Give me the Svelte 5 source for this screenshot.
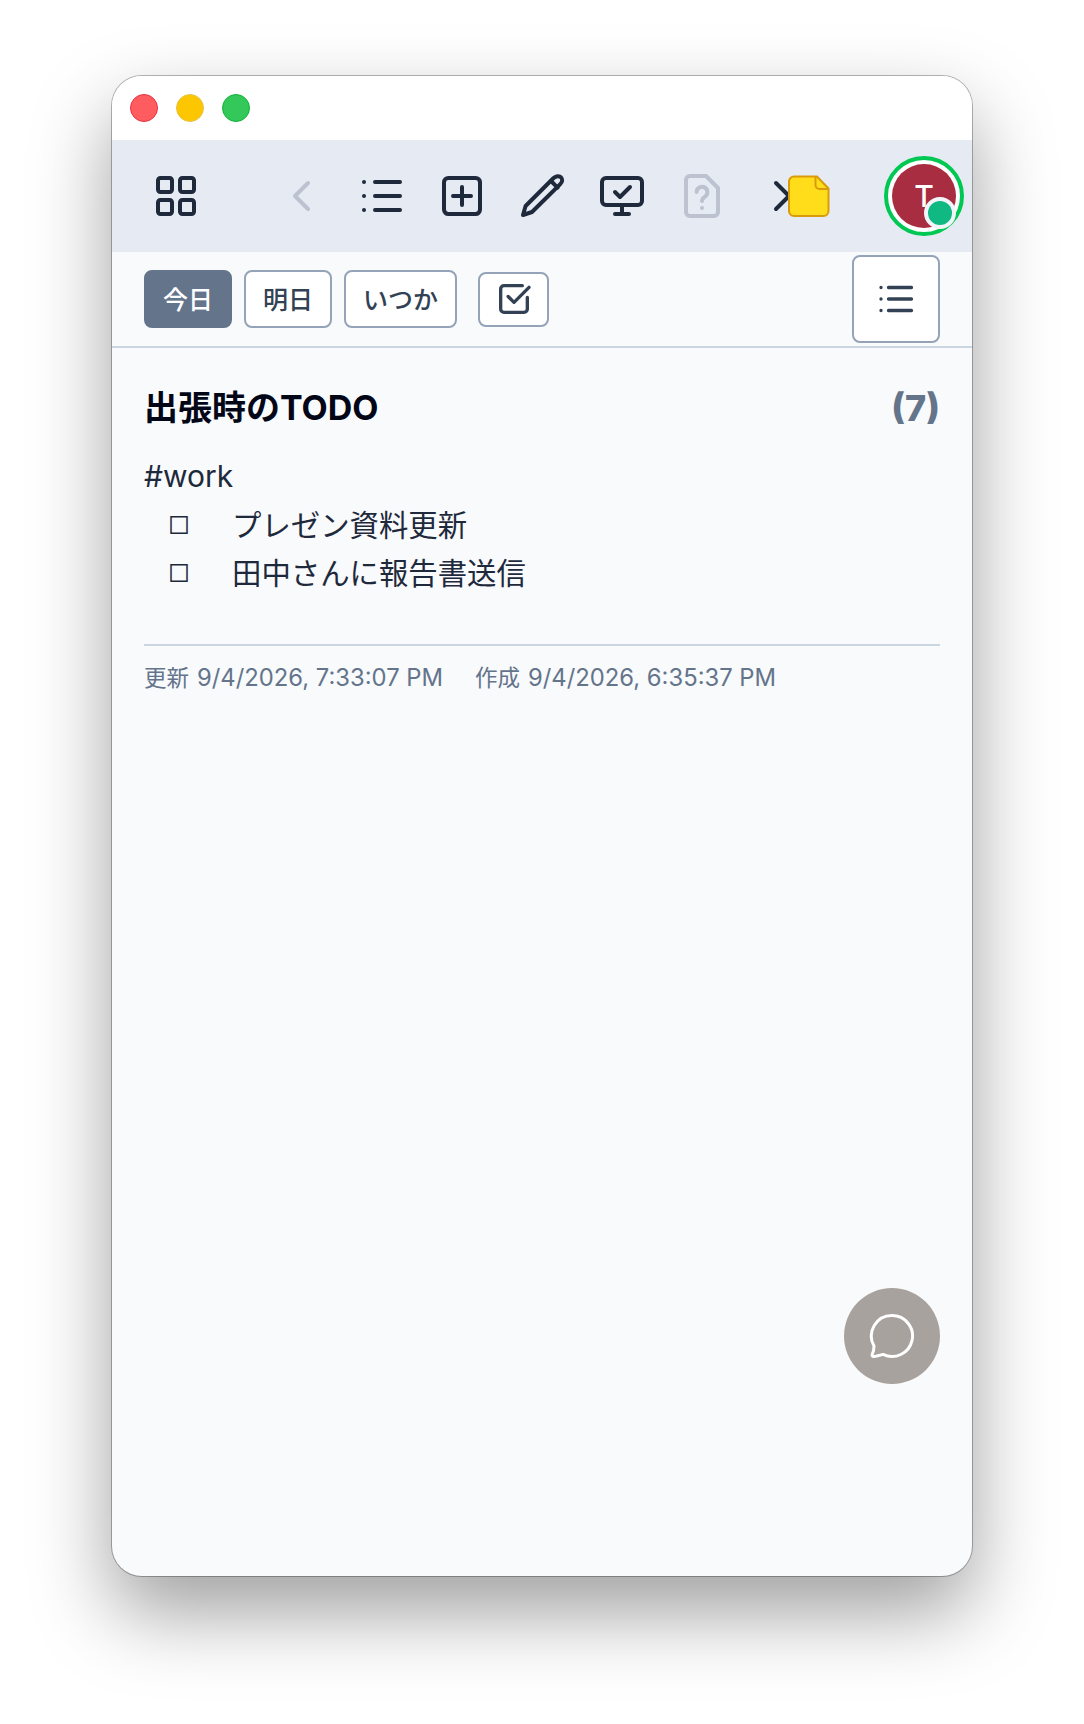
<script>
  const tabs = [
    { label: '今日', active: true },
    { label: '明日', active: false },
    { label: 'いつか', active: false }
  ];
  const items = ['プレゼン資料更新', '田中さんに報告書送信'];
</script>

<div class="stage">
  <div class="window">
    <header class="titlebar">
      <span class="light red"></span>
      <span class="light yellow"></span>
      <span class="light green"></span>
    </header>

    <nav class="toolbar">
      <button class="slot first" aria-label="apps">
        <svg viewBox="0 0 24 24" class="icon"><rect x="3" y="3" width="7" height="7" rx="1.2"/><rect x="14" y="3" width="7" height="7" rx="1.2"/><rect x="3" y="14" width="7" height="7" rx="1.2"/><rect x="14" y="14" width="7" height="7" rx="1.2"/></svg>
      </button>
      <button class="slot back" aria-label="back">
        <svg viewBox="0 0 24 24" class="icon muted"><path d="M15 5.500 8.500 12l6.500 6.500"/></svg>
      </button>
      <button class="slot" aria-label="list">
        <svg viewBox="0 0 24 24" class="icon"><path d="M8.500 5H21M8.500 12H21M8.500 19H21"/><path d="M3 5h.01M3 12h.01M3 19h.01"/></svg>
      </button>
      <button class="slot" aria-label="add">
        <svg viewBox="0 0 24 24" class="icon"><rect x="3" y="3" width="18" height="18" rx="2.200"/><path d="M12 7.500v9M7.500 12h9"/></svg>
      </button>
      <button class="slot" aria-label="edit">
        <svg viewBox="0 0 24 24" class="icon"><path d="M2.500 21.500 3.800 17 17.800 3c1.200-1 2.900-1.200 3.700-.3 1 1 .7 2.300-.5 3.500L7 20z"/><path d="m16.500 4.500 3.300 3.300"/></svg>
      </button>
      <button class="slot" aria-label="present">
        <svg viewBox="0 0 24 24" class="icon"><rect x="2" y="3" width="20" height="13.500" rx="2"/><path d="M12 16.500V21M8.500 21h7M8.500 10l2.500 2.500 5-5"/></svg>
      </button>
      <button class="slot" aria-label="help">
        <svg viewBox="0 0 24 24" class="icon muted"><path d="M6 2h8l6 6v12a2 2 0 0 1-2 2H6a2 2 0 0 1-2-2V4a2 2 0 0 1 2-2z"/><path d="M9.300 10a2.700 2.700 0 1 1 4.200 2.300c-.9.600-1.500 1.100-1.500 2.200"/><path d="M12 18h.01"/></svg>
      </button>
      <button class="slot note" aria-label="note">
        <svg viewBox="0 0 24 24" class="icon chev"><path d="M8.500 5.500 15 12l-6.500 6.500"/></svg>
        <svg viewBox="0 0 42 43" class="sticky"><path d="M6 1.500h23l11.500 12V36a5 5 0 0 1-5 5H6a5 5 0 0 1-5-5V6.500a5 5 0 0 1 5-5z" fill="#ffdd1a" stroke="#d99b0a" stroke-width="2"/><path d="M27.500 1.500V10a4 4 0 0 0 4 4h9" fill="none" stroke="#d99b0a" stroke-width="2"/></svg>
      </button>
      <div class="avatar">
        <div class="face">T</div>
        <span class="dot"></span>
      </div>
    </nav>

    <div class="subbar">
      {#each tabs as tab}
        <button class="tab" class:active={tab.active}>{tab.label}</button>
      {/each}
      <button class="tab check" aria-label="done">
        <svg viewBox="0 0 24 24"><path d="M20 11v7a2 2 0 0 1-2 2H6a2 2 0 0 1-2-2V6a2 2 0 0 1 2-2h11"/><path d="m8.500 10.500 3.500 3.500 9-9"/></svg>
      </button>
      <button class="tab listbtn" aria-label="list view">
        <svg viewBox="0 0 24 24"><path d="M7.500 5.100h13.800M7.500 12h13.800M7.500 18.900h13.800"/><path d="M3 5.100h.01M3 12h.01M3 18.900h.01"/></svg>
      </button>
    </div>

    <main class="content">
      <div class="heading">
        <h1>出張時のTODO</h1>
        <span class="count">(7)</span>
      </div>
      <p class="tag">#work</p>
      <ul>
        {#each items as item}
          <li><span class="box">□</span><span>{item}</span></li>
        {/each}
      </ul>
      <div class="meta">
        <span><span class="label">更新</span>9/4/2026, 7:33:07 PM</span>
        <span><span class="label">作成</span>9/4/2026, 6:35:37 PM</span>
      </div>
      <button class="fab" aria-label="chat">
        <svg viewBox="0 0 48 48"><path d="M24 3.500a20.500 20.500 0 1 1-9 38.900c-3 .8-6.500 1.900-9 2.100-1.700.1-2.400-.9-1.700-2.300.8-1.600 1.700-5 1.700-8.200A20.500 20.500 0 0 1 24 3.500z"/></svg>
      </button>
    </main>
  </div>
</div>

<style>
  :global(body) {
    margin: 0;
    background: #fff;
    font-family: Inter, "Noto Sans CJK JP", sans-serif;
  }
  .stage {
    height: 1724px;
    padding: 76px 112px 0;
    box-sizing: border-box;
    overflow: hidden;
  }
  .window {
    width: 860px;
    height: 1500px;
    border-radius: 30px;
    overflow: hidden;
    background: #f8fafc;
    display: flex;
    flex-direction: column;
    box-shadow: 0 0 0 1px rgba(0, 0, 0, 0.28), 0 36px 80px rgba(0, 0, 0, 0.38);
  }
  .titlebar {
    height: 64px;
    flex: none;
    background: #fff;
    display: flex;
    align-items: center;
    gap: 18px;
    padding-left: 18px;
  }
  .light {
    width: 28px;
    height: 28px;
    border-radius: 50%;
    box-sizing: border-box;
    border: 1px solid;
  }
  .red { background: #ff5c60; border-color: #ec3040; }
  .yellow { background: #fcc700; border-color: #e6c24a; }
  .green { background: #34c759; border-color: #12b43a; }
  .toolbar {
    height: 112px;
    flex: none;
    background: #e5eaf3;
    display: flex;
    align-items: center;
    padding-left: 24px;
  }
  .slot {
    width: 80px;
    height: 80px;
    padding: 0;
    border: 0;
    background: none;
    display: flex;
    align-items: center;
    justify-content: center;
    flex: none;
  }
  .back { margin-left: 46px; }
  .icon {
    width: 48px;
    height: 48px;
    fill: none;
    stroke: #1e293b;
    stroke-width: 2;
    stroke-linecap: round;
    stroke-linejoin: round;
  }
  .muted { stroke: #bcc2cf; }
  .note {
    width: 142px;
    justify-content: flex-start;
    padding-left: 17px;
    box-sizing: border-box;
  }
  .chev { flex: none; }
  .sticky {
    width: 42px;
    height: 43px;
    margin-left: -19px;
    flex: none;
    position: relative;
  }
  .avatar {
    width: 80px;
    height: 80px;
    box-sizing: border-box;
    border-radius: 50%;
    border: 4px solid #00c853;
    padding: 4px;
    background: #fff;
    position: relative;
    flex: none;
  }
  .face {
    width: 64px;
    height: 64px;
    border-radius: 50%;
    background: #a82d40;
    color: #fff;
    font-size: 30px;
    font-weight: 500;
    line-height: 64px;
    text-align: center;
  }
  .dot {
    position: absolute;
    right: 4px;
    bottom: 3px;
    width: 24px;
    height: 24px;
    border-radius: 50%;
    background: #10b981;
    border: 4px solid #f1f5f9;
  }
  .subbar {
    height: 96px;
    flex: none;
    box-sizing: border-box;
    border-bottom: 2px solid #cbd5e1;
    display: flex;
    align-items: center;
    padding: 0 32px;
    gap: 12px;
  }
  .tab {
    height: 58px;
    padding: 0 17px 2px;
    box-sizing: border-box;
    border: 2px solid #94a3b8;
    border-radius: 8px;
    background: #fff;
    color: #334155;
    font: 500 25px Inter, "Noto Sans CJK JP", sans-serif;
    display: flex;
    align-items: center;
    justify-content: center;
  }
  .tab.active {
    background: #64748b;
    border-color: #64748b;
    color: #fff;
  }
  .check {
    width: 71px;
    height: 55px;
    margin-left: 9px;
    padding: 0;
  }
  .check svg, .listbtn svg {
    fill: none;
    stroke: #334155;
    stroke-width: 2;
    stroke-linecap: round;
    stroke-linejoin: round;
  }
  .check svg { width: 40px; height: 40px; }
  .listbtn {
    width: 88px;
    height: 88px;
    margin-left: auto;
    padding: 0;
  }
  .listbtn svg { width: 40px; height: 40px; }
  .content {
    flex: 1;
    position: relative;
    padding: 32px 32px 0;
    color: #1e293b;
  }
  .heading {
    display: flex;
    justify-content: space-between;
    align-items: center;
    height: 56px;
  }
  h1 {
    margin: -6px 0 0;
    font-size: 34px;
    font-weight: 700;
    color: #020617;
  }
  .count {
    font-size: 36px;
    font-weight: 800;
    color: #64748b;
  }
  .tag {
    margin: 16px 0 0;
    font-size: 30px;
    line-height: 48px;
  }
  ul {
    list-style: none;
    margin: 0;
    padding: 2px 0 0;
    font-size: 29.400px;
    line-height: 48px;
  }
  li { display: flex; }
  .box {
    width: 88px;
    padding-left: 24px;
    box-sizing: border-box;
    font-size: 24px;
    font-weight: 300;
  }
  .meta {
    margin-top: 46px;
    border-top: 2px solid #cbd5e1;
    padding-top: 18px;
    display: flex;
    gap: 32px;
    font-size: 23.800px;
    line-height: 28px;
    color: #64748b;
  }
  .label {
    font-size: 22.500px;
    margin-right: 8px;
  }
  .fab {
    position: absolute;
    right: 32px;
    bottom: 192px;
    width: 96px;
    height: 96px;
    padding: 0;
    border: 0;
    border-radius: 50%;
    background: #a8a29e;
    display: flex;
    align-items: center;
    justify-content: center;
  }
  .fab svg {
    width: 48px;
    height: 48px;
    fill: none;
    stroke: #fff;
    stroke-width: 3;
    stroke-linejoin: round;
  }
</style>
